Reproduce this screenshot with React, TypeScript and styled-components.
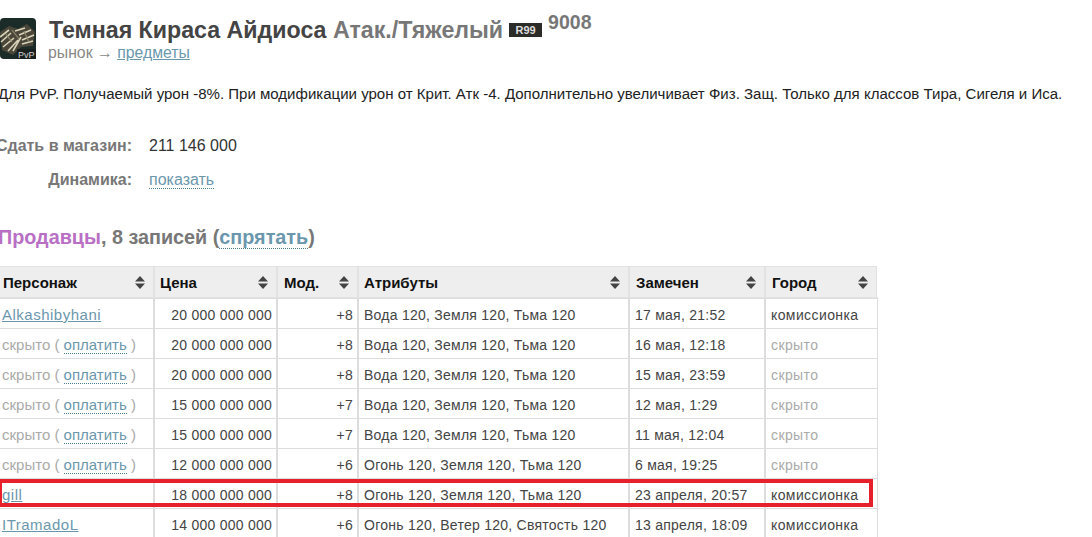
import React from 'react';
import styled, { createGlobalStyle } from 'styled-components';

const GlobalStyle = createGlobalStyle`
  html, body {
    margin: 0;
    background: #fff;
    overflow: hidden;
  }
  body {
    font-family: "Liberation Sans", Arial, sans-serif;
    font-size: 14px;
    color: #333;
  }
`;

const Page = styled.div`
  position: relative;
  width: 1094px;
  height: 537px;
  overflow: hidden;
  margin-left: -2px;
`;

const Header = styled.header`
  display: flex;
  gap: 13px;
  padding: 18px 0 0 2px;
  height: 47px;
`;

const Thumb = styled.svg`
  width: 36px;
  height: 41px;
  flex: none;
`;

const Titles = styled.div`
  display: flex;
  flex-direction: column;
`;

const TitleRow = styled.div`
  display: flex;
  align-items: flex-start;
  height: 26px;
`;

const Title = styled.h1`
  margin: 0;
  font-size: 23.2px;
  line-height: 25px;
  font-weight: bold;
  color: #444;
  white-space: nowrap;
`;

const Muted = styled.span`
  color: #777;
`;

const Grade = styled.span`
  margin: 5px 0 0 6px;
  width: 33px;
  height: 14px;
  background: #2b2b27;
  color: #ddd;
  font-size: 11px;
  line-height: 14px;
  font-weight: bold;
  text-align: center;
`;

const Count = styled.span`
  margin: -7px 0 0 6px;
  font-size: 19.5px;
  line-height: 22px;
  font-weight: bold;
  color: #777;
`;

const Crumbs = styled.div`
  margin-left: -1px;
  font-size: 15.8px;
  line-height: 17px;
  color: #888;
`;

const Link = styled.a`
  color: #6b97ad;
  text-decoration: underline;
`;

const NameLink = styled(Link)`
  letter-spacing: 0.5px;
`;

const DottedLink = styled.a`
  color: #6b97ad;
  text-decoration: none;
  border-bottom: 1px dotted #4d7f99;
`;

const Description = styled.p`
  margin: 20px 0 0;
  font-size: 15.04px;
  line-height: 18px;
  color: #222;
  white-space: nowrap;
`;

const Facts = styled.dl`
  display: grid;
  grid-template-columns: 134px auto;
  column-gap: 17px;
  row-gap: 16px;
  margin: 34px 0 0;
  font-size: 16px;
  line-height: 18px;
  justify-content: start;
`;

const FactName = styled.dt`
  display: flex;
  justify-content: flex-end;
  font-weight: bold;
  color: #777;
  white-space: nowrap;
`;

const FactValue = styled.dd`
  margin: 0;
  color: #333;
`;

const Section = styled.h2`
  margin: 37px 0 0;
  font-size: 19.8px;
  line-height: 22px;
  font-weight: bold;
  color: #777;
`;

const Accent = styled.span`
  color: #b86fc4;
`;

const Table = styled.table`
  margin-top: 17px;
  border-collapse: collapse;
  table-layout: fixed;
  width: 878px;
`;

const HeadCell = styled.th<{ $w: number }>`
  width: ${({ $w }) => $w}px;
  height: 32px;
  padding: 0 4px 0 5px;
  box-sizing: border-box;
  background: #eee;
  border: 2px solid #fff;
  outline: 1px solid #e2e2e2;
  outline-offset: -1px;
  border-bottom: 2px solid #ddd;
  text-align: left;
  font-size: 15px;
  color: #111;

  &:first-child {
    padding-left: 3px;
  }
  &:nth-child(3),
  &:nth-child(5),
  &:nth-child(6) {
    padding-left: 6px;
  }
`;

const HeadInner = styled.div`
  display: flex;
  align-items: center;
  justify-content: space-between;
  padding-right: 4px;
`;

const SortIcon = styled.svg`
  width: 10px;
  height: 13px;
  flex: none;
`;

const Cell = styled.td<{ $align?: string; $dim?: boolean }>`
  height: 30px;
  padding: 3px ${({ $align }) => ($align ? 4 : 5)}px 0 5px;
  box-sizing: border-box;
  border: 1px solid #ddd;
  border-top: 0;
  border-left-width: 2px;
  text-align: ${({ $align }) => $align || 'left'};
  color: ${({ $dim }) => ($dim ? '#aaa' : '#444')};
  white-space: nowrap;
  letter-spacing: 0.25px;

  &:first-child {
    padding: 2px 5px 0 2px;
    font-size: 15px;
    letter-spacing: 0;
  }
  &:last-child {
    letter-spacing: 0.4px;
  }
`;

const Hidden = styled.span`
  color: #aaa;
`;

const Highlight = styled.div`
  position: absolute;
  left: 0;
  top: 479px;
  width: 875px;
  height: 28px;
  box-sizing: border-box;
  border: 4px solid #e8202c;
  pointer-events: none;
`;

const columns = [
  { name: 'Персонаж', w: 155 },
  { name: 'Цена', w: 123 },
  { name: 'Мод.', w: 81 },
  { name: 'Атрибуты', w: 271 },
  { name: 'Замечен', w: 136 },
  { name: 'Город', w: 112 },
];

const rows = [
  { who: 'Alkashibyhani', price: '20 000 000 000', mod: '+8', attrs: 'Вода 120, Земля 120, Тьма 120', seen: '17 мая, 21:52', city: 'комиссионка' },
  { who: '', price: '20 000 000 000', mod: '+8', attrs: 'Вода 120, Земля 120, Тьма 120', seen: '16 мая, 12:18', city: '' },
  { who: '', price: '20 000 000 000', mod: '+8', attrs: 'Вода 120, Земля 120, Тьма 120', seen: '15 мая, 23:59', city: '' },
  { who: '', price: '15 000 000 000', mod: '+7', attrs: 'Вода 120, Земля 120, Тьма 120', seen: '12 мая, 1:29', city: '' },
  { who: '', price: '15 000 000 000', mod: '+7', attrs: 'Вода 120, Земля 120, Тьма 120', seen: '11 мая, 12:04', city: '' },
  { who: '', price: '12 000 000 000', mod: '+6', attrs: 'Огонь 120, Земля 120, Тьма 120', seen: '6 мая, 19:25', city: '' },
  { who: 'gill', price: '18 000 000 000', mod: '+8', attrs: 'Огонь 120, Земля 120, Тьма 120', seen: '23 апреля, 20:57', city: 'комиссионка' },
  { who: 'ITramadoL', price: '14 000 000 000', mod: '+6', attrs: 'Огонь 120, Ветер 120, Святость 120', seen: '13 апреля, 18:09', city: 'комиссионка' },
];

export default function App() {
  return (
    <>
      <GlobalStyle />
      <Page>
        <Header>
          <Thumb viewBox="0 0 36 41">
            <rect width="36" height="41" rx="4" fill="#1b2b27" />
            <path d="M0 14 L9 8 L18 11 L27 6 L35 14 L33 28 L21 29 L13 37 L2 32 Z" fill="#4a473a" />
            <path d="M0 19 L9 12 M1 24 L11 15 M3 29 L14 20 M8 33 L18 22 M13 33 L21 19 M15 13 L25 10 M19 17 L31 12 M22 22 L34 17 M22 26 L33 23" stroke="#d8d3b8" strokeWidth="1.6" />
            <path d="M6 16 L12 24 M12 12 L19 21 M24 13 L29 24" stroke="#8f8a70" strokeWidth="1.2" />
            <rect x="17" y="31" width="19" height="10" fill="#1a1f1d" />
            <text x="18" y="39.5" fontSize="9" fill="#d2d2d2" fontFamily="Liberation Sans">PvP</text>
          </Thumb>
          <Titles>
            <TitleRow>
              <Title>
                Темная Кираса Айдиоса <Muted>Атак./Тяжелый</Muted>
              </Title>
              <Grade>R99</Grade>
              <Count>9008</Count>
            </TitleRow>
            <Crumbs>
              рынок → <Link href="#">предметы</Link>
            </Crumbs>
          </Titles>
        </Header>
        <Description>
          Для PvP. Получаемый урон -8%. При модификации урон от Крит. Атк -4. Дополнительно увеличивает Физ. Защ. Только для классов Тира, Сигеля и Иса.
        </Description>
        <Facts>
          <FactName>Сдать в магазин:</FactName>
          <FactValue>211 146 000</FactValue>
          <FactName>Динамика:</FactName>
          <FactValue>
            <DottedLink href="#">показать</DottedLink>
          </FactValue>
        </Facts>
        <Section>
          <Accent>Продавцы</Accent>, 8 записей (<DottedLink href="#">спрятать</DottedLink>)
        </Section>
        <Table>
          <thead>
            <tr>
              {columns.map((c) => (
                <HeadCell key={c.name} $w={c.w}>
                  <HeadInner>
                    {c.name}
                    <SortIcon viewBox="0 0 10 13">
                      <path d="M5 0 L10 5.5 H0 Z M0 7.5 H10 L5 13 Z" fill="#444" />
                    </SortIcon>
                  </HeadInner>
                </HeadCell>
              ))}
            </tr>
          </thead>
          <tbody>
            {rows.map((r, i) => (
              <tr key={i}>
                <Cell>
                  {r.who ? (
                    <NameLink href="#">{r.who}</NameLink>
                  ) : (
                    <Hidden>
                      скрыто ( <DottedLink href="#">оплатить</DottedLink> )
                    </Hidden>
                  )}
                </Cell>
                <Cell $align="right">{r.price}</Cell>
                <Cell $align="right">{r.mod}</Cell>
                <Cell>{r.attrs}</Cell>
                <Cell>{r.seen}</Cell>
                <Cell $dim={!r.city}>{r.city || 'скрыто'}</Cell>
              </tr>
            ))}
          </tbody>
        </Table>
        <Highlight />
      </Page>
    </>
  );
}
